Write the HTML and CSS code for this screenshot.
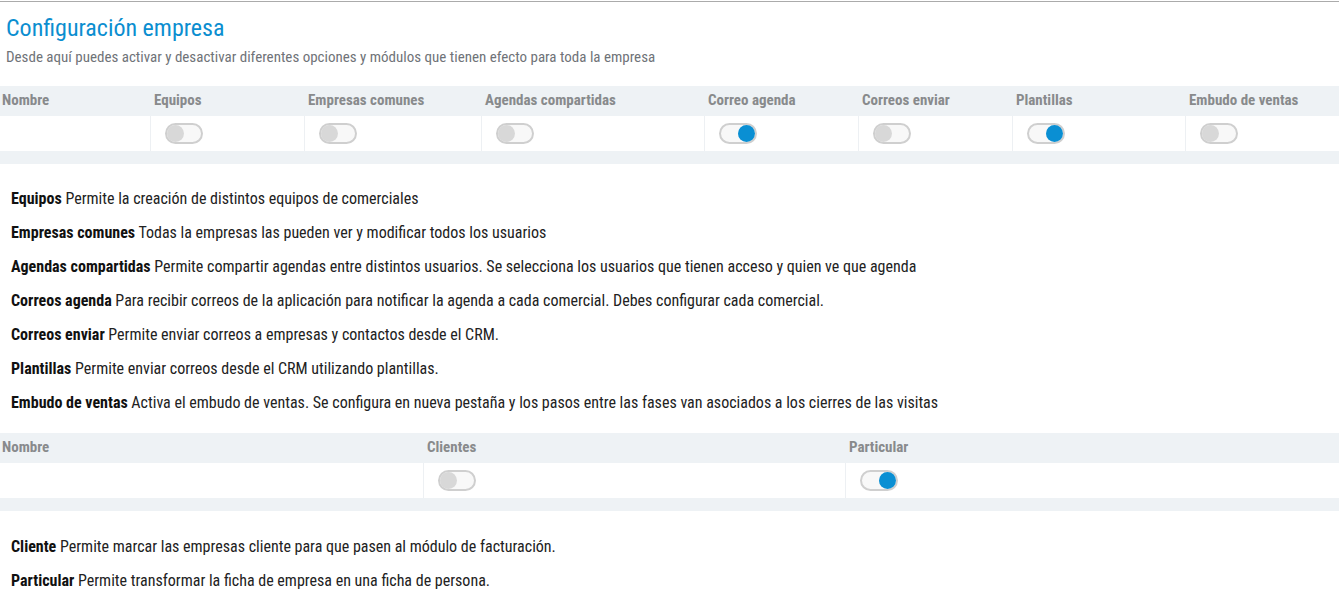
FILE: index.html
```html
<!DOCTYPE html>
<html lang="es">
<head>
<meta charset="utf-8">
<title>Configuración empresa</title>
<link rel="stylesheet" href="styles.css">
</head>
<body>
<div class="page">
  <header class="intro">
    <h1 class="title">Configuración empresa</h1>
    <p class="subtitle">Desde aquí puedes activar y desactivar diferentes opciones y módulos que tienen efecto para toda la empresa</p>
  </header>

  <section class="table table-8">
    <div class="th first">Nombre</div>
    <div class="th">Equipos</div>
    <div class="th">Empresas comunes</div>
    <div class="th">Agendas compartidas</div>
    <div class="th">Correo agenda</div>
    <div class="th">Correos enviar</div>
    <div class="th">Plantillas</div>
    <div class="th">Embudo de ventas</div>

    <div class="td first"></div>
    <div class="td"><span class="toggle"></span></div>
    <div class="td"><span class="toggle"></span></div>
    <div class="td"><span class="toggle"></span></div>
    <div class="td"><span class="toggle on"></span></div>
    <div class="td"><span class="toggle"></span></div>
    <div class="td"><span class="toggle on"></span></div>
    <div class="td"><span class="toggle"></span></div>
  </section>
  <div class="band"></div>

  <ul class="desc desc-main">
    <li><b>Equipos</b> Permite la creación de distintos equipos de comerciales</li>
    <li><b>Empresas comunes</b> Todas la empresas las pueden ver y modificar todos los usuarios</li>
    <li><b>Agendas compartidas</b> Permite compartir agendas entre distintos usuarios. Se selecciona los usuarios que tienen acceso y quien ve que agenda</li>
    <li><b>Correos agenda</b> Para recibir correos de la aplicación para notificar la agenda a cada comercial. Debes configurar cada comercial.</li>
    <li><b>Correos enviar</b> Permite enviar correos a empresas y contactos desde el CRM.</li>
    <li><b>Plantillas</b> Permite enviar correos desde el CRM utilizando plantillas.</li>
    <li><b>Embudo de ventas</b> Activa el embudo de ventas. Se configura en nueva pestaña y los pasos entre las fases van asociados a los cierres de las visitas</li>
  </ul>

  <section class="table table-3">
    <div class="th first">Nombre</div>
    <div class="th">Clientes</div>
    <div class="th">Particular</div>

    <div class="td first"></div>
    <div class="td"><span class="toggle"></span></div>
    <div class="td"><span class="toggle on"></span></div>
  </section>
  <div class="band"></div>

  <ul class="desc desc-extra">
    <li><b>Cliente</b> Permite marcar las empresas cliente para que pasen al módulo de facturación.</li>
    <li><b>Particular</b> Permite transformar la ficha de empresa en una ficha de persona.</li>
  </ul>
</div>
</body>
</html>
```
FILE: styles.css
```css
* { box-sizing: border-box; }

html, body {
  margin: 0;
  padding: 0;
  background: #ffffff;
}

body {
  font-family: "Roboto Condensed", Roboto, "Liberation Sans", sans-serif;
  color: #222;
  padding-top: 1px;
}

.page {
  border-top: 1px solid #ababab;
}

.intro {
  padding: 12px 6px 0;
}

.title {
  margin: 0;
  font-size: 24px;
  line-height: 28px;
  font-weight: 400;
  color: #0b8ed0;
}

.subtitle {
  margin: 6px 0 0;
  font-size: 15px;
  line-height: 18px;
  color: #6f7378;
}

.table {
  display: grid;
}

.table-8 {
  margin-top: 20px;
  grid-template-columns: 150px 154px 177px 223px 154px 154px 173px 1fr;
}

.table-3 {
  grid-template-columns: 423px 422px 1fr;
}

.th {
  height: 30px;
  display: flex;
  align-items: center;
  padding-left: 4px;
  padding-bottom: 2px;
  background: #eef2f5;
  font-size: 15px;
  font-weight: 700;
  color: #888a8c;
  white-space: nowrap;
}

.th.first {
  padding-left: 2px;
}

.td {
  height: 35px;
  display: flex;
  align-items: center;
  padding-left: 14px;
  border-left: 1px solid #edf0f3;
  background: #fff;
}

.td.first {
  border-left: none;
}

.band {
  height: 13px;
  background: #eef2f5;
}

.toggle {
  position: relative;
  display: block;
  width: 38px;
  height: 21px;
  border: 2px solid #cfcfcf;
  border-radius: 11px;
  background: #f8f8f8;
}

.toggle::after {
  content: "";
  position: absolute;
  top: 0;
  left: 0;
  width: 17px;
  height: 17px;
  border-radius: 50%;
  background: #d8d8d8;
}

.toggle.on::after {
  left: auto;
  right: 0;
  background: #0a8fd3;
}

.desc {
  list-style: none;
  margin: 0;
  padding: 18px 0 13px 11px;
}

.desc-extra {
  padding-top: 19px;
  padding-bottom: 0;
}

.desc li {
  height: 34px;
  line-height: 20px;
  padding-top: 7px;
  font-size: 16px;
  color: #222;
  white-space: nowrap;
}

.desc b {
  font-weight: 700;
  color: #111;
}
```
